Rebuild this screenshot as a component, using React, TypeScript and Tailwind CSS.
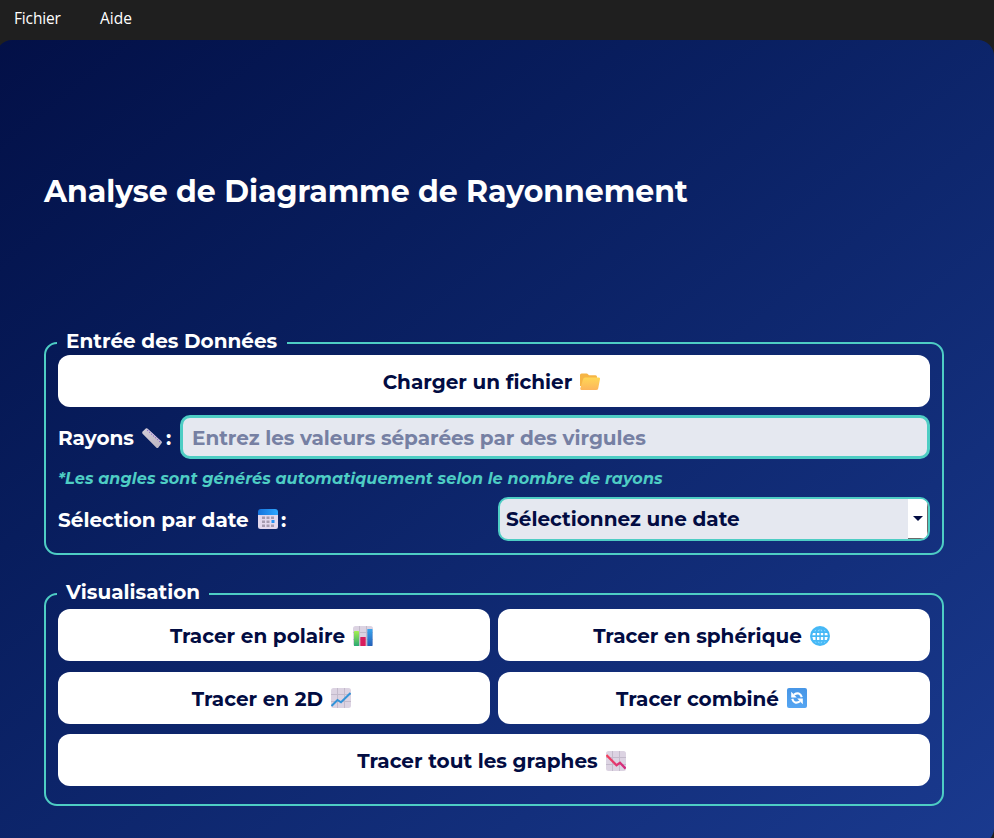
import React from "react";

const font = "font-['Montserrat','Inter',sans-serif]";

function Folder() {
  return (
    <svg width="20" height="20" viewBox="0 0 20 20" className="shrink-0">
      <defs>
        <linearGradient id="fo" x1="0" y1="0" x2="0" y2="1">
          <stop offset="0" stopColor="#ffd755" />
          <stop offset="1" stopColor="#fdb55b" />
        </linearGradient>
      </defs>
      <path d="M0 3Q0 1.5 1.5 1.5H6.5Q7.5 1.5 8.2 2.5L9 3.3H15.5Q17 3.3 17 4.8V14H0Z" fill="#f6b545" />
      <path d="M3 7.5Q3.4 5.5 5.2 5.5H18.7Q20.3 5.5 20 7.1L18.2 16.4Q17.9 18 16 18H1.6Q0 18 .3 16.3Z" fill="url(#fo)" />
    </svg>
  );
}

function Ruler() {
  return (
    <svg width="20" height="20" viewBox="0 0 20 20" className="mt-[2px] shrink-0">
      <defs>
        <linearGradient id="ru" x1="0" y1="0" x2="1" y2="1">
          <stop offset="0" stopColor="#d3ccd6" />
          <stop offset="1" stopColor="#bdb6c2" />
        </linearGradient>
      </defs>
      <path d="M.6 3.6L3.8 .5Q4.6 -.2 5.4 .5L19.4 13.2Q20.4 14.2 19.5 15.2L16.4 19.4Q15.4 20.4 14.2 19.4L.6 5.8Q-.2 4.6 .6 3.6Z" fill="url(#ru)" />
      <path d="M5.2 1.2L19.2 14" stroke="#cdbde8" strokeWidth="1" />
      <path d="M6 2.2L5.4 2.8M8 4L7.4 4.6M10 5.9L9.4 6.5M12 7.7L11.4 8.3M14 9.5L13.4 10.1M16 11.3L15.4 11.9M18 13.2L17.4 13.8" stroke="#7d58c4" strokeWidth="1.1" />
    </svg>
  );
}

function Calendar() {
  return (
    <svg width="20" height="20" viewBox="0 0 20 20" className="shrink-0">
      <defs>
        <linearGradient id="ca" x1="0" y1="0" x2="1" y2="0">
          <stop offset="0" stopColor="#1673dc" />
          <stop offset="1" stopColor="#2da6ff" />
        </linearGradient>
      </defs>
      <path d="M0 5H20V18Q20 20 18 20H2.5Q0 20 0 17.5Z" fill="#e3d8ed" />
      <path d="M0 6V3Q0 0 3 0H17Q20 0 20 3V6Z" fill="url(#ca)" />
      <path d="M4 7.5H7V10H4ZM8.5 7.5H11.5V10H8.5ZM13 7.5H16V10H13ZM4 11.5H7V14H4ZM8.5 11.5H11.5V14H8.5ZM4 15.5H7V18H4ZM8.5 15.5H11.5V18H8.5ZM13 15.5H16V18H13Z" fill="#a69bb0" />
      <path d="M13.5 11H16.5V14H13.5Z" fill="#2491f3" />
    </svg>
  );
}

function GridTile() {
  return (
    <>
      <rect width="20" height="20" rx="2.5" fill="#dcd3e2" />
      <path d="M6.5 0V20M13.5 0V20M0 6.5H20M0 13.5H20" stroke="#c3bacb" strokeWidth="1" />
    </>
  );
}

function Bars() {
  return (
    <svg width="20" height="20" viewBox="0 0 20 20" className="shrink-0">
      <defs>
        <linearGradient id="b1" x1="0" y1="0" x2="0" y2="1">
          <stop offset="0" stopColor="#a4ee50" />
          <stop offset="1" stopColor="#2aa873" />
        </linearGradient>
        <linearGradient id="b3" x1="0" y1="0" x2="0" y2="1">
          <stop offset="0" stopColor="#3aa5ee" />
          <stop offset="1" stopColor="#2460b8" />
        </linearGradient>
      </defs>
      <GridTile />
      <rect x="1" y="5" width="5" height="15" rx=".6" fill="url(#b1)" />
      <rect x="7.3" y="11" width="5.4" height="9" rx=".6" fill="#d91d5d" />
      <rect x="14.3" y="3" width="5.2" height="17" rx=".6" fill="url(#b3)" />
    </svg>
  );
}

function Globe() {
  return (
    <svg width="20" height="20" viewBox="0 0 20 20" className="shrink-0">
      <circle cx="10" cy="10" r="10" fill="#45b8f6" />
      <path d="M3 7H5.5V9.3H2.3ZM7 7H9.4V9.3H7ZM10.8 7H13.2V9.3H10.8ZM14.7 7H17.2L17.8 9.3H14.7ZM2.3 11H5.5V14H3.3ZM7 11H9.4V14H7ZM10.8 11H13.2V14H10.8ZM14.7 11H17.8L16.8 14H14.7Z" fill="#fff" />
      <path d="M7.5 5.2L9.4 3V5.2ZM10.8 3L12.6 5.2H10.8ZM7.5 15.8H9.4V17.8ZM10.8 15.8H12.6L10.8 17.8ZM4 5.2L6.3 3.4L5.8 5.2ZM13.8 3.4L16 5.2H14.3ZM4.3 15.8H6L6.5 17.3ZM14.2 15.8H15.8L13.7 17.3Z" fill="#91daff" />
    </svg>
  );
}

function ChartUp() {
  return (
    <svg width="20" height="20" viewBox="0 0 20 20" className="shrink-0">
      <GridTile />
      <path d="M.5 18L6.5 12L10 14.3L19.5 5" stroke="#3293d8" strokeWidth="2" fill="none" />
    </svg>
  );
}

function ChartDown() {
  return (
    <svg width="20" height="20" viewBox="0 0 20 20" className="shrink-0">
      <defs>
        <linearGradient id="cd" x1="0" y1="0" x2="1" y2="0">
          <stop offset="0" stopColor="#f5405b" />
          <stop offset="1" stopColor="#cf2b82" />
        </linearGradient>
      </defs>
      <GridTile />
      <path d="M.4 4L10.5 14.2L14 11.8L19.6 17.6" stroke="url(#cd)" strokeWidth="2.3" fill="none" />
    </svg>
  );
}

function Refresh() {
  return (
    <svg width="20" height="20" viewBox="0 0 20 20" className="shrink-0">
      <defs>
        <linearGradient id="re" x1="0" y1="0" x2="0" y2="1">
          <stop offset="0" stopColor="#4796e6" />
          <stop offset="1" stopColor="#55a5f2" />
        </linearGradient>
      </defs>
      <rect width="20" height="20" rx="2" fill="url(#re)" />
      <path d="M7 6.6Q12.6 3.2 14.8 9.2M13 13.4Q7.4 16.8 5.2 10.8" stroke="#fff" strokeWidth="2.1" fill="none" />
      <path d="M4.2 3.8V9.4H9.8ZM15.8 16.2V10.6H10.2Z" fill="#fff" />
    </svg>
  );
}

interface ActionProps {
  label: string;
  icon: React.ReactNode;
  wide?: boolean;
}

function Action({ label, icon, wide }: ActionProps) {
  return (
    <button
      className={`flex h-[52px] items-center justify-center gap-2 rounded-xl bg-white pr-[5px] pt-px text-[20px] font-bold text-[#020c42] ${wide ? "col-span-2" : ""}`}
    >
      <span className="whitespace-nowrap pt-px tracking-[-0.01px]">{label}</span>
      {icon}
    </button>
  );
}

const fieldset =
  "h-[224px] w-[900px] min-w-0 rounded-[13px] border-2 border-[#4ecdc4] pl-3 pr-3";
const legend = "ml-[-1px] h-6 whitespace-nowrap pl-[9px] text-[20px] leading-5";

export default function App() {
  return (
    <div className={`flex h-[838px] w-[994px] flex-col overflow-hidden bg-[#1f1f1f] ${font}`}>
      <nav className="flex h-10 shrink-0 items-center gap-10 pb-[3px] pl-[14px] font-['Open_Sans','Noto_Sans',sans-serif] text-[15.5px] text-white">
        <span className="w-[46px] whitespace-nowrap tracking-[-0.15px]">Fichier</span>
        <span className="whitespace-nowrap">Aide</span>
      </nav>
      <main className="ml-[-4px] flex h-[804px] w-[998px] shrink-0 flex-col rounded-2xl bg-linear-to-br from-[#031047] to-[#1a3a8f] pl-12 font-bold text-white">
        <h1 className="mt-[131px] h-10 whitespace-nowrap text-[30px] leading-[42px] tracking-[-0.03px]">
          Analyse de Diagramme de Rayonnement
        </h1>
        <fieldset className={`mt-[120px] ${fieldset}`}>
          <legend className={`w-[230px] ${legend}`}>Entrée des Données</legend>
          <div className="flex flex-col">
            <Action label="Charger un fichier" icon={<Folder />} />
            <div className="mt-2 flex h-11 items-center text-[20px]">
              <span className="w-[84px] whitespace-nowrap pt-px">Rayons</span>
              <Ruler />
              <span className="w-[18px] pl-1 pt-px">:</span>
              <div className="flex h-11 flex-1 items-center rounded-[10px] border-[3px] border-[#4ecdc4] bg-[#e5e8f0] pl-[9px] text-[#7680a3]">
                <span className="whitespace-nowrap pt-[2px] tracking-[-0.03px]">Entrez les valeurs séparées par des virgules</span>
              </div>
            </div>
            <p className="mt-[7px] h-6 whitespace-nowrap text-[16px] italic leading-[25px] tracking-[0.11px] text-[#4ecdc4]">
              *Les angles sont générés automatiquement selon le nombre de rayons
            </p>
            <div className="mt-[7px] grid grid-cols-2 gap-2 text-[20px]">
              <div className="flex items-center">
                <span className="w-[200px] whitespace-nowrap pt-px">Sélection par date</span>
                <Calendar />
                <span className="pl-[3px] pt-px">:</span>
              </div>
              <div className="flex h-11 items-center justify-between overflow-hidden rounded-[10px] border-2 border-[#4ecdc4] bg-[#e5e8f0] pl-1.5 text-[#020c42]">
                <span className="whitespace-nowrap pb-px">Sélectionnez une date</span>
                <span className="flex h-10 w-5 items-center justify-center border-b border-r border-[#696969] bg-white">
                  <svg width="10" height="5" viewBox="0 0 10 5">
                    <path d="M0 0H10L5 5Z" fill="#020c42" />
                  </svg>
                </span>
              </div>
            </div>
          </div>
        </fieldset>
        <fieldset className={`mt-[27px] ${fieldset}`}>
          <legend className={`w-[152px] ${legend}`}>Visualisation</legend>
          <div className="grid grid-cols-2 gap-x-2 gap-y-[10.5px] pt-[3px]">
            <Action label="Tracer en polaire" icon={<Bars />} />
            <Action label="Tracer en sphérique" icon={<Globe />} />
            <Action label="Tracer en 2D" icon={<ChartUp />} />
            <Action label="Tracer combiné" icon={<Refresh />} />
            <Action label="Tracer tout les graphes" icon={<ChartDown />} wide />
          </div>
        </fieldset>
      </main>
    </div>
  );
}
